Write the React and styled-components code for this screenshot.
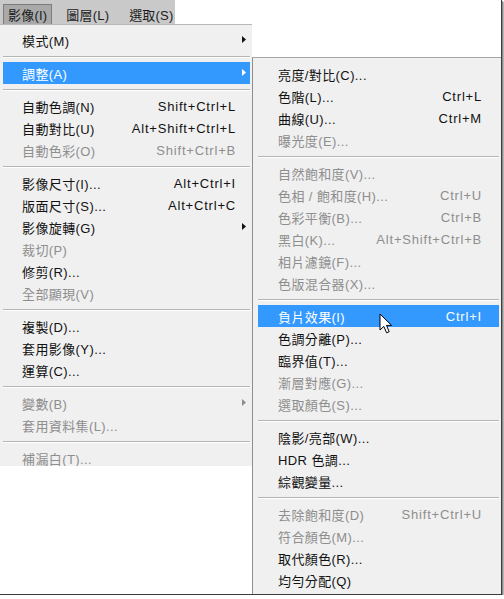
import React from 'react';
import styled, { createGlobalStyle } from 'styled-components';

const GlobalStyle = createGlobalStyle`
  html, body { margin: 0; padding: 0; background: #fff; }
  body {
    font-family: "Liberation Sans", "Noto Sans CJK TC", sans-serif;
    font-size: 13px;
    letter-spacing: 0.4px;
  }
`;

const imageItems = [
  { label: '模式(M)', sub: true },
  'sep',
  { label: '調整(A)', sub: true, active: true },
  'sep',
  { label: '自動色調(N)', key: 'Shift+Ctrl+L' },
  { label: '自動對比(U)', key: 'Alt+Shift+Ctrl+L' },
  { label: '自動色彩(O)', key: 'Shift+Ctrl+B', off: true },
  'sep',
  { label: '影像尺寸(I)...', key: 'Alt+Ctrl+I' },
  { label: '版面尺寸(S)...', key: 'Alt+Ctrl+C' },
  { label: '影像旋轉(G)', sub: true },
  { label: '裁切(P)', off: true },
  { label: '修剪(R)...' },
  { label: '全部顯現(V)', off: true },
  'sep',
  { label: '複製(D)...' },
  { label: '套用影像(Y)...' },
  { label: '運算(C)...' },
  'sep',
  { label: '變數(B)', sub: true, off: true },
  { label: '套用資料集(L)...', off: true },
  'sep',
  { label: '補漏白(T)...', off: true },
];

const adjustItems = [
  { label: '亮度/對比(C)...' },
  { label: '色階(L)...', key: 'Ctrl+L' },
  { label: '曲線(U)...', key: 'Ctrl+M' },
  { label: '曝光度(E)...', off: true },
  'sep',
  { label: '自然飽和度(V)...', off: true },
  { label: '色相 / 飽和度(H)...', key: 'Ctrl+U', off: true },
  { label: '色彩平衡(B)...', key: 'Ctrl+B', off: true },
  { label: '黑白(K)...', key: 'Alt+Shift+Ctrl+B', off: true },
  { label: '相片濾鏡(F)...', off: true },
  { label: '色版混合器(X)...', off: true },
  'sep',
  { label: '負片效果(I)', key: 'Ctrl+I', active: true, cursor: true },
  { label: '色調分離(P)...' },
  { label: '臨界值(T)...' },
  { label: '漸層對應(G)...', off: true },
  { label: '選取顏色(S)...', off: true },
  'sep',
  { label: '陰影/亮部(W)...' },
  { label: 'HDR 色調...' },
  { label: '綜觀變量...' },
  'sep',
  { label: '去除飽和度(D)', key: 'Shift+Ctrl+U', off: true },
  { label: '符合顏色(M)...', off: true },
  { label: '取代顏色(R)...' },
  { label: '均勻分配(Q)' },
];

const MenuList = ({ items, left, right }) => (
  <>
    {items.map((it, i) =>
      it === 'sep' ? (
        <Separator key={i} />
      ) : (
        <Item key={i} $active={it.active} $off={it.off} $left={left} $right={right}>
          <Label>{it.label}</Label>
          {it.key && <Shortcut>{it.key}</Shortcut>}
          {it.sub && (
            <Arrow width="4" height="7" viewBox="0 0 4 7">
              <path d="M0 0 L4 3.5 L0 7 Z" fill="currentColor" />
            </Arrow>
          )}
          {it.cursor && (
            <Cursor width="14" height="22" viewBox="0 0 14 22">
              <path
                d="M1 1 L1 17 L4.8 13.4 L7.6 19.8 L10.2 18.7 L7.5 12.4 L12.6 12.4 Z"
                fill="#fff"
                stroke="#000"
                strokeWidth="1"
              />
            </Cursor>
          )}
        </Item>
      )
    )}
  </>
);

const App = () => (
  <>
    <GlobalStyle />
    <Frame>
      <LeftColumn>
        <MenuBar>
          <BarItem $open $gap={10}>影像(I)</BarItem>
          <BarItem $gap={12}>圖層(L)</BarItem>
          <BarItem>選取(S)</BarItem>
        </MenuBar>
        <ImageMenu>
          <MenuList items={imageItems} left={19} right={14} />
        </ImageMenu>
      </LeftColumn>
      <AdjustMenu>
        <MenuList items={adjustItems} left={20} right={17} />
      </AdjustMenu>
    </Frame>
  </>
);

const Frame = styled.div`
  display: flex;
  align-items: flex-start;
  width: 501px;
  height: 594px;
  overflow: hidden;
  background: #fff;
  border-right: 1px solid #3c3c3c;
  border-bottom: 1px solid #3c3c3c;
  box-shadow: 1px 1px 0 #8a8a8a, 2px 2px 0 #b4b4b4, 3px 3px 0 #d8d8d8;
`;

const LeftColumn = styled.div`
  display: flex;
  flex-direction: column;
  width: 252px;
  flex-shrink: 0;
`;

const MenuBar = styled.div`
  display: flex;
  align-items: flex-end;
  width: 175px;
  height: 24px;
  padding-left: 3px;
  box-sizing: border-box;
  background: #c9c9c9;
`;

const BarItem = styled.div`
  display: flex;
  align-items: center;
  height: 20px;
  padding: 0 ${p => (p.$open ? 4 : 3)}px;
  margin-right: ${p => p.$gap || 0}px;
  box-sizing: border-box;
  white-space: nowrap;
  letter-spacing: 0.2px;
  color: #1c1c1c;
  background: ${p => (p.$open ? '#a9a9a9' : 'transparent')};
  border: 1px solid ${p => (p.$open ? '#7d7d7d' : 'transparent')};
  border-bottom: none;
`;

const ImageMenu = styled.div`
  display: flex;
  flex-direction: column;
  height: 442px;
  padding-top: 4px;
  box-sizing: border-box;
  background: #f0f0f0;
  border-top: 1px solid #b8b8b8;
  overflow: hidden;
`;

const AdjustMenu = styled.div`
  display: flex;
  flex-direction: column;
  flex: 1;
  margin-top: 57px;
  height: 540px;
  padding: 5px 0 0 2px;
  box-sizing: border-box;
  background: #f0f0f0;
  border-left: 1px solid #8f8f8f;
  border-top: 1px solid #a5a5a5;
`;

const Item = styled.div`
  position: relative;
  display: flex;
  align-items: center;
  height: 22px;
  flex-shrink: 0;
  margin: 0 2px 0 3px;
  padding: 0 ${p => p.$right}px 0 ${p => p.$left}px;
  color: ${p => (p.$active ? '#fff' : p.$off ? '#8e8e8e' : '#121212')};
  background: ${p => (p.$active ? '#3399ff' : 'transparent')};
  white-space: nowrap;
`;

const Label = styled.span`
  flex: 1;
`;

const Shortcut = styled.span`
  letter-spacing: 0.8px;
`;

const Arrow = styled.svg`
  position: absolute;
  right: 4px;
  top: 7px;
`;

const Cursor = styled.svg`
  position: absolute;
  left: 121px;
  top: 8px;
`;

const Separator = styled.div`
  height: 11px;
  flex-shrink: 0;
  margin: 0 2px 0 3px;
  display: flex;
  align-items: center;
  &::before {
    content: '';
    flex: 1;
    border-top: 1px solid #b5b5b5;
    border-bottom: 1px solid #fff;
  }
`;

export default App;
